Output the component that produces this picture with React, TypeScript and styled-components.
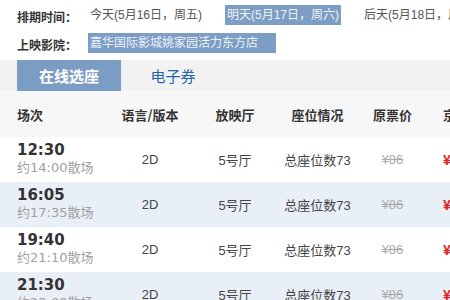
import React from "react";
import styled, { createGlobalStyle } from "styled-components";

const Global = createGlobalStyle`
  html, body { margin: 0; padding: 0; background: #fff; }
  body { font-family: "Liberation Sans", "Noto Sans CJK SC", sans-serif; }
  #root { width: 450px; height: 300px; overflow: hidden; }
`;

const Page = styled.div`
  width: 450px;
  height: 300px;
  overflow: hidden;
  background: #fff;
`;

const InfoRow = styled.div<{ $h: number }>`
  display: flex;
  align-items: center;
  height: ${(p) => p.$h}px;
  padding-left: 17px;
  white-space: nowrap;
`;

const Label = styled.span`
  width: 71px;
  flex: none;
  font-size: 12px;
  font-weight: bold;
  color: #333;
  font-family: "Noto Sans CJK SC", sans-serif;
  padding-top: 2px;
`;

const Option = styled.span<{ $active?: boolean; $extra?: number }>`
  display: inline-block;
  font-size: 12px;
  line-height: 20px;
  height: 20px;
  padding: 0 ${(p) => 2 + (p.$extra ?? 0)}px 0 2px;
  margin-right: 21px;
  color: ${(p) => (p.$active ? "#eef3f9" : "#555")};
  background: ${(p) => (p.$active ? "#7c9dc4" : "transparent")};
  font-family: "Liberation Sans", "Noto Sans CJK SC", sans-serif;
`;

const TabBar = styled.div`
  display: flex;
  margin-top: 4px;
  height: 31px;
  background: #f2f2f2;
  padding-left: 17px;
`;

const Tab = styled.div<{ $active?: boolean }>`
  width: 104px;
  display: flex;
  align-items: center;
  justify-content: center;
  font-size: 15px;
  font-weight: ${(p) => (p.$active ? "bold" : "normal")};
  color: ${(p) => (p.$active ? "#fff" : "#2263ad")};
  background: ${(p) => (p.$active ? "#7c9dc3" : "transparent")};
  font-family: "Noto Sans CJK SC", sans-serif;
`;

const Grid = styled.div`
  display: grid;
  grid-template-columns: 105px 90px 80px 85px 65px 80px;
  width: 505px;
`;

const Row = styled.div<{ $bg: string; $h: number }>`
  display: contents;
  & > div {
    background: ${(p) => p.$bg};
    height: ${(p) => p.$h}px;
  }
`;

const Cell = styled.div<{ $align?: "left" | "center"; $pad?: number }>`
  display: flex;
  flex-direction: column;
  justify-content: center;
  align-items: ${(p) => (p.$align === "left" ? "flex-start" : "center")};
  padding-left: ${(p) => p.$pad ?? 0}px;
  font-size: 13px;
  color: #444;
  white-space: nowrap;
  font-family: "Liberation Sans", "Noto Sans CJK SC", sans-serif;
`;

const HeadText = styled.span`
  font-size: 13px;
  font-weight: bold;
  color: #333;
  font-family: "Noto Sans CJK SC", sans-serif;
`;

const Time = styled.span`
  font-family: "DejaVu Sans", sans-serif;
  font-weight: bold;
  font-size: 15px;
  line-height: 17px;
  color: #333;
`;

const Ends = styled.span`
  font-family: "DejaVu Sans", "Noto Sans CJK SC", sans-serif;
  font-size: 13px;
  line-height: 18px;
  color: #a0a0a0;
`;

const OldPrice = styled.span`
  color: #aaa;
  text-decoration: line-through;
  font-size: 13px;
`;

const NewPrice = styled.span`
  color: #d22;
  font-weight: bold;
  font-size: 14px;
`;

const shows = [
  { t: "12:30", e: "约14:00散场" },
  { t: "16:05", e: "约17:35散场" },
  { t: "19:40", e: "约21:10散场" },
  { t: "21:30", e: "约23:00散场" },
];

export default function App() {
  return (
    <Page>
      <Global />
      <InfoRow $h={30}>
        <Label>排期时间：</Label>
        <Option>今天(5月16日，周五)</Option>
        <Option $active>明天(5月17日，周六)</Option>
        <Option>后天(5月18日，周日)</Option>
      </InfoRow>
      <InfoRow $h={26}>
        <Label>上映影院：</Label>
        <Option $active $extra={16}>嘉华国际影城姚家园活力东方店</Option>
      </InfoRow>
      <TabBar>
        <Tab $active>在线选座</Tab>
        <Tab>电子券</Tab>
      </TabBar>
      <Grid>
        <Row $bg="#f7f7f7" $h={46}>
          <Cell $align="left" $pad={17}><HeadText>场次</HeadText></Cell>
          <Cell><HeadText>语言/版本</HeadText></Cell>
          <Cell><HeadText>放映厅</HeadText></Cell>
          <Cell><HeadText>座位情况</HeadText></Cell>
          <Cell><HeadText>原票价</HeadText></Cell>
          <Cell $align="left" $pad={18}><HeadText>京东价</HeadText></Cell>
        </Row>
        {shows.map((s, i) => (
          <Row key={s.t} $bg={i % 2 === 0 ? "#ffffff" : "#e9eff7"} $h={45}>
            <Cell $align="left" $pad={17}>
              <Time>{s.t}</Time>
              <Ends>{s.e}</Ends>
            </Cell>
            <Cell>2D</Cell>
            <Cell>5号厅</Cell>
            <Cell>总座位数73</Cell>
            <Cell><OldPrice>¥86</OldPrice></Cell>
            <Cell $align="left" $pad={18}><NewPrice>¥49</NewPrice></Cell>
          </Row>
        ))}
      </Grid>
    </Page>
  );
}
